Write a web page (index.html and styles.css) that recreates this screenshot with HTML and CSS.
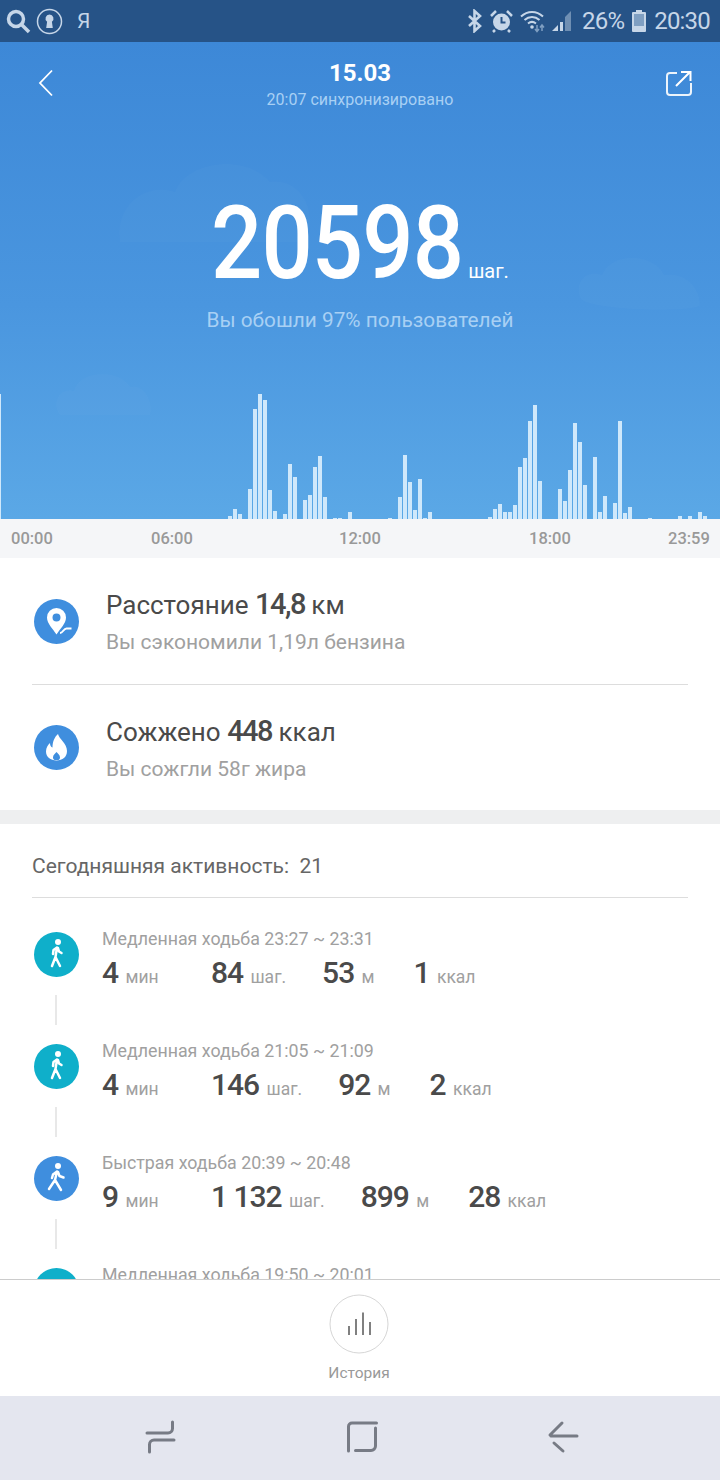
FILE: index.html
```html
<!DOCTYPE html>
<html>
  <head>
    <title>15.03</title>
    <link rel="stylesheet" href="styles.css">
  </head>

  <body>
    <main class="screen">
      <div class="statusbar">
        <div class="status-left">
          <svg class="ic-search" width="26" height="26" viewBox="0 0 26 26"><circle cx="11" cy="11" r="7.5"/><path d="M16.5 16.5 L24 24"/></svg>
          <svg class="ic-lock" width="27" height="27" viewBox="0 0 27 27"><circle class="ring" cx="13.5" cy="13.5" r="12"/><path class="hole" d="M13.5 6.5a4 4 0 0 1 2.4 7.2l.9 6.3h-6.6l.9-6.3a4 4 0 0 1 2.4-7.2z"/></svg>
          <span class="ya">Я</span>
        </div>
        <div class="status-right">
          <svg class="ic-bt" width="14" height="24" viewBox="0 0 14 24"><path d="M1 7l11 10-5.5 5V2L12 7 1 17"/></svg>
          <svg class="ic-alarm" width="23" height="24" viewBox="0 0 23 24"><circle cx="11.5" cy="13" r="8.5"/><path class="hand" d="M11.5 8v5.5h4"/><path class="ear" d="M1 7l5-5M22 7l-5-5M5 21l-2 2M18 21l2 2"/></svg>
          <svg class="ic-wifi" width="26" height="24" viewBox="0 0 26 24"><path class="arc" d="M1 7.500C7.500 1.500 16.500 1.500 23 7.500M4.500 11c4.500-4 10.500-4 15 0M8 14.500c2.500-2 5.500-2 8 0"/><circle class="dot" cx="12" cy="18" r="1.800"/><path class="updown" d="M17 16v6M15 20l2 2.500 2-2.500M22 22v-6M20 18.500l2-2.500 2 2.500"/></svg>
          <svg class="ic-signal" width="21" height="24" viewBox="0 0 21 24"><path class="sig-dim" d="M20 2v20h-6V8z"/><path d="M7 16v6H1z"/><rect x="9" y="13" width="3" height="9"/></svg>
          <span class="pct">26%</span>
          <svg class="ic-batt" width="16" height="24" viewBox="0 0 16 24"><path class="batt-cap" d="M5 1h6v3H5z"/><rect class="batt-body" x="1" y="3" width="14" height="20" rx="1"/><rect class="batt-in" x="3" y="5" width="10" height="12"/></svg>
          <span class="clock">20:30</span>
        </div>
      </div>

      <section class="hero">
        <svg class="clouds" width="720" height="477" viewBox="0 0 720 477">
          <path d="M150 260c-6-40 30-60 55-50 10-30 70-40 95-10 30-5 50 30 35 60z" transform="translate(-30 -60)"/>
          <path d="M60 373c-10-14 2-28 14-24 6-22 46-22 56-4 14-4 24 16 20 28z"/>
          <path d="M580 255c-6-16 8-28 22-22 10-24 52-22 62 0 20-4 36 12 36 30 0 8-120 6-120-8z"/>
        </svg>

        <header class="topbar">
          <svg class="back" width="16" height="28" viewBox="0 0 16 28"><path d="M14 1.500 L2 14 L14 26.500"/></svg>
          <div class="topbar-title">
            <h1>15.03</h1>
            <p>20:07 синхронизировано</p>
          </div>
          <svg class="share" width="26" height="26" viewBox="0 0 26 26"><path class="share-box" d="M11 3H4a3 3 0 0 0-3 3v16a3 3 0 0 0 3 3h18a3 3 0 0 0 3-3v-9"/><path d="M10 16 L24 2 M15 2h9.500v9"/></svg>
        </header>

        <div class="steps">
          <span class="steps-num">20598</span>
          <span class="steps-unit">шаг.</span>
        </div>
        <p class="steps-note">Вы обошли 97% пользователей</p>

        <svg class="chart" width="720" height="125" viewBox="0 0 720 125">
          <rect x="0" y="0" width="1" height="125"/>
          <rect x="228" y="122" width="4" height="3"/>
          <rect x="233" y="115" width="4" height="10"/>
          <rect x="238" y="120" width="4" height="5"/>
          <rect x="248" y="95" width="4" height="30"/>
          <rect x="253" y="15" width="4" height="110"/>
          <rect x="258" y="0" width="4" height="125"/>
          <rect x="263" y="6" width="4" height="119"/>
          <rect x="268" y="96" width="4" height="29"/>
          <rect x="273" y="117" width="4" height="8"/>
          <rect x="283" y="120" width="4" height="5"/>
          <rect x="288" y="70" width="4" height="55"/>
          <rect x="293" y="83" width="4" height="42"/>
          <rect x="303" y="106" width="4" height="19"/>
          <rect x="308" y="101" width="4" height="24"/>
          <rect x="313" y="73" width="4" height="52"/>
          <rect x="318" y="62" width="4" height="63"/>
          <rect x="323" y="103" width="4" height="22"/>
          <rect x="333" y="124" width="4" height="1"/>
          <rect x="338" y="124" width="4" height="1"/>
          <rect x="348" y="118" width="4" height="7"/>
          <rect x="388" y="124" width="4" height="1"/>
          <rect x="398" y="103" width="4" height="22"/>
          <rect x="403" y="61" width="4" height="64"/>
          <rect x="408" y="88" width="4" height="37"/>
          <rect x="413" y="116" width="4" height="9"/>
          <rect x="418" y="85" width="4" height="40"/>
          <rect x="423" y="124" width="4" height="1"/>
          <rect x="428" y="118" width="4" height="7"/>
          <rect x="488" y="123" width="4" height="2"/>
          <rect x="493" y="115" width="4" height="10"/>
          <rect x="498" y="110" width="4" height="15"/>
          <rect x="503" y="118" width="4" height="7"/>
          <rect x="508" y="118" width="4" height="7"/>
          <rect x="513" y="111" width="4" height="14"/>
          <rect x="518" y="73" width="4" height="52"/>
          <rect x="523" y="64" width="4" height="61"/>
          <rect x="528" y="27" width="4" height="98"/>
          <rect x="533" y="11" width="4" height="114"/>
          <rect x="538" y="87" width="4" height="38"/>
          <rect x="558" y="95" width="4" height="30"/>
          <rect x="563" y="107" width="4" height="18"/>
          <rect x="568" y="76" width="4" height="49"/>
          <rect x="573" y="29" width="4" height="96"/>
          <rect x="578" y="48" width="4" height="77"/>
          <rect x="583" y="91" width="4" height="34"/>
          <rect x="593" y="63" width="4" height="62"/>
          <rect x="598" y="118" width="4" height="7"/>
          <rect x="603" y="102" width="4" height="23"/>
          <rect x="613" y="109" width="4" height="16"/>
          <rect x="618" y="27" width="4" height="98"/>
          <rect x="623" y="119" width="4" height="6"/>
          <rect x="628" y="113" width="4" height="12"/>
          <rect x="648" y="124" width="4" height="1"/>
          <rect x="678" y="122" width="4" height="3"/>
          <rect x="688" y="122" width="4" height="3"/>
          <rect x="698" y="118" width="4" height="7"/>
          <rect x="703" y="122" width="4" height="3"/>
        </svg>
      </section>

      <div class="axis">
        <span>00:00</span>
        <span>06:00</span>
        <span>12:00</span>
        <span>18:00</span>
        <span>23:59</span>
      </div>

      <section class="summary">
        <div class="summary-row">
          <svg class="round-icon" width="45" height="45" viewBox="0 0 45 45">
            <circle class="blue" cx="22.500" cy="22.500" r="22.500"/>
            <path class="white" fill-rule="evenodd" d="M22.500 9a9.500 9.500 0 0 1 9.500 9.500c0 6-6 11.500-9.500 17-3.500-5.500-9.500-11-9.500-17A9.500 9.500 0 0 1 22.500 9zm0 5.500a4 4 0 1 0 0 8 4 4 0 0 0 0-8z"/>
            <path class="wave" d="M26 34c3 0 3.500-4.500 6.500-4.500h5"/>
          </svg>
          <div>
            <p class="summary-title">Расстояние <b>14,8</b> км</p>
            <p class="summary-sub">Вы сэкономили 1,19л бензина</p>
          </div>
        </div>
        <div class="summary-row">
          <svg class="round-icon" width="45" height="45" viewBox="0 0 45 45">
            <circle class="blue" cx="22.500" cy="22.500" r="22.500"/>
            <path class="white" fill-rule="evenodd" d="M24 9c1 5 9 9 9 17 0 6-4.500 9.500-10.500 9.500S12 32 12 26.500c0-4 2-6.500 4-8.500 0 2.500 1 4 2.500 4.500C18.500 17 20.500 12 24 9zm-1.500 18c-1.500 2-3.500 3-3.500 5.500 0 1 .5 2 1.500 2.500h4c1-.5 1.500-1.500 1.500-2.500 0-2.500-2-3.500-3.500-5.500z"/>
          </svg>
          <div>
            <p class="summary-title">Сожжено <b>448</b> ккал</p>
            <p class="summary-sub">Вы сожгли 58г жира</p>
          </div>
        </div>
      </section>

      <section class="activity">
        <h2>Сегодняшняя активность:&nbsp; 21</h2>

        <div class="act-row">
          <div class="act-side">
            <svg class="round-icon" width="45" height="45" viewBox="0 0 45 45"><circle class="teal" cx="22.500" cy="22.500" r="22.500"/><circle class="white" cx="24" cy="10" r="3"/><path class="figure" d="M23 15.500l-1.500 9.500 4.500 9M21.500 25l-3.500 9M23 15.500l-3.500 2.500-.5 4M24 16l1 3.500 2.500 1.500"/></svg>
            <i class="act-line"></i>
          </div>
          <div class="act-body">
            <p class="act-title">Медленная ходьба 23:27 ~ 23:31</p>
            <div class="act-stats">
              <span class="stat stat-first"><b>4</b> мин</span>
              <span class="stat"><b>84</b> шаг.</span>
              <span class="stat"><b>53</b> м</span>
              <span class="stat stat-last"><b>1</b> ккал</span>
            </div>
          </div>
        </div>

        <div class="act-row">
          <div class="act-side">
            <svg class="round-icon" width="45" height="45" viewBox="0 0 45 45"><circle class="teal" cx="22.500" cy="22.500" r="22.500"/><circle class="white" cx="24" cy="10" r="3"/><path class="figure" d="M23 15.500l-1.500 9.500 4.500 9M21.500 25l-3.500 9M23 15.500l-3.500 2.500-.5 4M24 16l1 3.500 2.500 1.500"/></svg>
            <i class="act-line"></i>
          </div>
          <div class="act-body">
            <p class="act-title">Медленная ходьба 21:05 ~ 21:09</p>
            <div class="act-stats">
              <span class="stat stat-first"><b>4</b> мин</span>
              <span class="stat"><b>146</b> шаг.</span>
              <span class="stat"><b>92</b> м</span>
              <span class="stat stat-last"><b>2</b> ккал</span>
            </div>
          </div>
        </div>

        <div class="act-row">
          <div class="act-side">
            <svg class="round-icon" width="45" height="45" viewBox="0 0 45 45"><circle class="blue" cx="22.500" cy="22.500" r="22.500"/><circle class="white" cx="24" cy="10" r="3"/><path class="figure" d="M23 15.500l-2 8.500 6 10M21 24l-6 9M23 15.500l-4 3-1 3.500M24 16l1.500 4 4 1.500"/></svg>
            <i class="act-line"></i>
          </div>
          <div class="act-body">
            <p class="act-title">Быстрая ходьба 20:39 ~ 20:48</p>
            <div class="act-stats">
              <span class="stat stat-first"><b>9</b> мин</span>
              <span class="stat"><b>1 132</b> шаг.</span>
              <span class="stat"><b>899</b> м</span>
              <span class="stat stat-last"><b>28</b> ккал</span>
            </div>
          </div>
        </div>

        <div class="act-row">
          <div class="act-side">
            <svg class="round-icon" width="45" height="45" viewBox="0 0 45 45"><circle class="teal" cx="22.500" cy="22.500" r="22.500"/></svg>
          </div>
          <div class="act-body">
            <p class="act-title">Медленная ходьба 19:50 ~ 20:01</p>
          </div>
        </div>
      </section>

      <div class="history">
        <svg width="60" height="60" viewBox="0 0 60 60"><circle cx="30" cy="30" r="29"/><path d="M20 41V32M27 41V25M34 41V18.500M41 41V28"/></svg>
        <span>История</span>
      </div>

      <nav class="navbar">
        <svg width="32" height="34" viewBox="0 0 32 34"><path d="M2 13h21a4.500 4.500 0 0 0 4.500-4.500V2M29 20H9a4.500 4.500 0 0 0-4.500 4.500V32"/></svg>
        <svg width="32" height="32" viewBox="0 0 32 32"><path d="M30.500 2H6a3.500 3.500 0 0 0-3.500 3.500V30M9.500 29.500H25a4.500 4.500 0 0 0 4.500-4.500V7"/></svg>
        <svg width="32" height="34" viewBox="0 0 32 34"><path d="M4 16h26M15 3L3 15M7 23l9 8"/></svg>
      </nav>
    </main>
  </body>
</html>
```

FILE: styles.css
```css
* {
  box-sizing: border-box;
}
body {
  margin: 0;
  font-family: Roboto, "Noto Sans", sans-serif;
  color: #4a4a4a;
  background: white;
}
p,
h1,
h2 {
  margin: 0;
  font-weight: normal;
}
.screen {
  width: 720px;
  height: 1480px;
  display: flex;
  flex-direction: column;
  overflow: hidden;
}

/* status bar */
.statusbar {
  height: 42px;
  flex: none;
  display: flex;
  justify-content: space-between;
  align-items: center;
  padding: 0 10px 0 5px;
  background: #265387;
  color: #c6d6e8;
}
.status-left,
.status-right {
  display: flex;
  align-items: center;
}
.statusbar svg {
  flex: none;
}
.ic-search circle,
.ic-search path {
  fill: none;
  stroke: #c6d6e8;
  stroke-width: 3.5;
}
.ic-lock {
  margin-left: 5px;
}
.ic-lock .ring {
  fill: none;
  stroke: #c6d6e8;
  stroke-width: 1.5;
}
.ic-lock .hole {
  fill: #c6d6e8;
}
.ya {
  margin-left: 14px;
  font-size: 21px;
}
.ic-bt path {
  fill: none;
  stroke: #c6d6e8;
  stroke-width: 2.6;
}
.ic-alarm {
  margin-left: 8px;
}
.ic-alarm circle {
  fill: #c6d6e8;
}
.ic-alarm .hand {
  fill: none;
  stroke: #265387;
  stroke-width: 2;
}
.ic-alarm .ear {
  fill: none;
  stroke: #c6d6e8;
  stroke-width: 2.5;
}
.ic-wifi {
  margin-left: 7px;
}
.ic-wifi .arc {
  fill: none;
  stroke: #c6d6e8;
  stroke-width: 2;
}
.ic-wifi .dot {
  fill: #c6d6e8;
}
.ic-wifi .updown {
  fill: none;
  stroke: #7f9fc2;
  stroke-width: 1.500;
}
.ic-signal {
  margin-left: 5px;
  fill: #c6d6e8;
}
.ic-signal .sig-dim {
  fill: #6f8fb3;
}
.pct,
.clock {
  font-size: 24px;
  letter-spacing: -0.8px;
}
.pct {
  margin-left: 10px;
}
.ic-batt {
  margin-left: 7px;
}
.batt-cap,
.batt-body {
  fill: #c6d6e8;
}
.batt-in {
  fill: #7f9fc2;
}
.clock {
  margin-left: 7px;
}

/* hero */
.hero {
  position: relative;
  height: 477px;
  flex: none;
  background: linear-gradient(#3d88d7, #4a96df 55%, #5ba8e6);
  color: white;
  text-align: center;
  overflow: hidden;
}
.clouds {
  position: absolute;
  left: 0;
  top: 0;
  fill: rgba(255, 255, 255, 0.018);
}
.topbar {
  position: relative;
  display: flex;
  justify-content: space-between;
  padding: 16px 28px 0 38px;
}
.back {
  margin-top: 11px;
}
.back path {
  fill: none;
  stroke: white;
  stroke-width: 1.800;
}
.share {
  margin-top: 12px;
}
.share path {
  fill: none;
  stroke: white;
  stroke-width: 2;
}
.share-box {
  opacity: 0.9;
}
.topbar-title h1 {
  font-size: 24px;
  line-height: 30px;
  font-weight: 700;
}
.topbar-title p {
  font-size: 16px;
  line-height: 24px;
  color: #a8d0f4;
}
.steps {
  position: relative;
  display: flex;
  justify-content: center;
  align-items: baseline;
  margin-top: 75px;
  height: 112px;
}
.steps-num {
  display: inline-block;
  font-size: 102px;
  font-weight: 500;
  line-height: 112px;
  letter-spacing: -1px;
  width: 248px;
  transform: scaleX(0.885);
  transform-origin: left;
  text-align: left;
}
.steps-unit {
  font-size: 20px;
  margin-left: 9px;
}
.steps-note {
  position: relative;
  margin-top: 7px;
  font-size: 20.800px;
  line-height: 28px;
  color: #a8d0f4;
}
.chart {
  position: absolute;
  left: 0;
  bottom: 0;
  fill: #cfe8fb;
}
.axis {
  height: 39px;
  flex: none;
  display: grid;
  grid-template-columns: 140px 188px 190px 139px auto;
  align-items: center;
  padding-left: 11px;
  background: #f5f6f8;
  color: #999;
  font-size: 16.500px;
  font-weight: 500;
}

/* distance and calories */
.round-icon {
  display: block;
  flex: none;
}
.blue {
  fill: #3f8ede;
}
.teal {
  fill: #0fafca;
}
.white {
  fill: white;
}
.wave {
  fill: none;
  stroke: white;
  stroke-width: 2;
}
.figure {
  fill: none;
  stroke: white;
  stroke-width: 2.500;
  stroke-linecap: round;
  stroke-linejoin: round;
}
.summary {
  height: 252px;
  flex: none;
  padding: 0 32px;
  border-bottom: 0;
}
.summary-row {
  height: 126px;
  display: flex;
  align-items: center;
  gap: 27px;
  padding-left: 2px;
}
.summary-row + .summary-row {
  border-top: 1px solid #ddd;
}
.summary-title {
  font-size: 26px;
  line-height: 36px;
  color: #4a4a4a;
}
.summary-title b {
  font-size: 29px;
  font-weight: 500;
  letter-spacing: -1.5px;
}
.summary-sub {
  margin-top: 5px;
  font-size: 21px;
  line-height: 28px;
  color: #a0a0a0;
}

/* today's list */
.activity {
  flex: 1;
  min-height: 0;
  overflow: hidden;
  padding: 0 32px;
  border-top: 14px solid #eeeff0;
}
.activity h2 {
  height: 74px;
  padding-top: 27px;
  font-size: 21px;
  line-height: 30px;
  color: #666;
  border-bottom: 1px solid #ddd;
  margin-bottom: 34px;
}
.act-row {
  display: flex;
  height: 112px;
  padding-left: 2px;
  gap: 23px;
}
.act-side {
  width: 45px;
  flex: none;
}
.act-line {
  display: block;
  width: 2px;
  height: 30px;
  margin: 18px 0 0 21px;
  background: #e8e8e8;
}
.act-body {
  margin-top: -4px;
}
.act-title {
  font-size: 17.800px;
  line-height: 22px;
  color: #a0a0a0;
}
.act-stats {
  display: flex;
  gap: 36px;
  margin-top: 5px;
}
.stat {
  font-size: 17.500px;
  line-height: 36px;
  color: #a0a0a0;
  white-space: nowrap;
}
.stat b {
  font-size: 30px;
  font-weight: 500;
  letter-spacing: -1px;
  color: #4a4a4a;
  margin-right: 3px;
}
.stat-first {
  min-width: 73px;
}
.stat-last {
  margin-left: 3px;
}

/* bottom */
.history {
  height: 117px;
  flex: none;
  display: flex;
  flex-direction: column;
  align-items: center;
  padding-top: 14px;
  background: white;
  border-top: 1px solid #ccc;
  font-size: 15.500px;
  color: #999;
}
.history svg {
  margin-left: -2px;
}
.history circle {
  fill: none;
  stroke: #d6d6d6;
  stroke-width: 1;
}
.history path {
  fill: none;
  stroke: #808080;
  stroke-width: 2;
}
.history span {
  margin-top: 10px;
  margin-left: -2px;
}
.navbar {
  height: 84px;
  flex: none;
  display: flex;
  justify-content: space-between;
  align-items: center;
  padding: 0 141px 2px 145px;
  background: #e4e6ef;
}
.navbar path {
  fill: none;
  stroke: #777b85;
  stroke-width: 3;
  stroke-linecap: round;
}
```
